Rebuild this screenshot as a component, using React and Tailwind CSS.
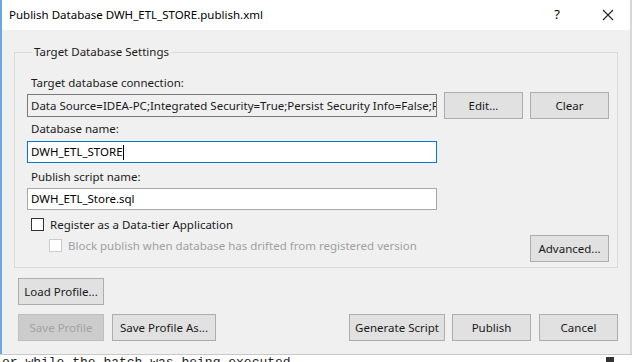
import React from 'react';

const font = { fontFamily: '"Noto Sans", "Liberation Sans", sans-serif' };

// Win32-style push button
const Btn = ({ children, className = '', disabled = false }) => (
  <button
    disabled={disabled}
    className={`h-[27px] flex items-center justify-center text-[11.5px] border ${
      disabled
        ? 'bg-[#cccccc] border-[#bfbfbf] text-[#a3a3a3]'
        : 'bg-[#e1e1e1] border-[#adadad] text-[#1a1a1a]'
    } ${className}`}
  >
    {children}
  </button>
);

const Label = ({ children }) => (
  <div className="h-[16px] leading-[16px] pl-[4px] text-[11.5px] text-[#1a1a1a]">{children}</div>
);

const Checkbox = ({ disabled }) => (
  <span
    className={`w-[13px] h-[13px] border bg-white shrink-0 ${
      disabled ? 'border-[#cccccc]' : 'border-[#333333]'
    }`}
  />
);

export default function App() {
  return (
    <div className="w-[632px] h-[362px] overflow-hidden bg-white relative" style={font}>
      <div className="h-[354px] flex flex-col border-l-2 border-r-2 border-l-[#6aa6e8] border-r-[#d8d8d8]">
        {/* title bar */}
        <div className="h-[30px] bg-white flex items-center pl-[7px] text-[11.5px] text-black shrink-0">
          <span className="flex-1">Publish Database DWH_ETL_STORE.publish.xml</span>
          <span className="w-[14px] text-center text-[13px]">?</span>
          <span className="w-[44px] flex justify-center ml-[22px]">
            <svg width="12" height="12" viewBox="0 0 12 12">
              <path d="M1 1 L11 11 M11 1 L1 11" stroke="#222" strokeWidth="1.1" fill="none" />
            </svg>
          </span>
        </div>

        {/* body */}
        <div className="flex-1 bg-[#f0f0f0] pl-[12px] pr-[12px] pt-[14px] flex flex-col">
          <fieldset className="border border-[#dcdcdc] w-[604px] h-[224px] pl-[12px] pr-[8px] pb-[6px] flex flex-col">
            <legend className="ml-[5px] px-[2px] text-[11.5px] text-[#1a1a1a] leading-[16px]">
              Target Database Settings
            </legend>

            <div className="mt-[15px]">
              <Label>Target database connection:</Label>
            </div>
            <div className="flex items-center mt-[1px]">
              <div className="w-[410px] h-[23px] border border-[#7a7a7a] bg-[#f0f0f0] flex items-center pl-[3px] text-[11.5px] text-[#1a1a1a] overflow-hidden whitespace-nowrap">
                Data Source=IDEA-PC;Integrated Security=True;Persist Security Info=False;Po
              </div>
              <Btn className="w-[79px] ml-[7px]">Edit...</Btn>
              <Btn className="w-[79px] ml-[7px]">Clear</Btn>
            </div>

            <div className="mt-[2px]">
              <Label>Database name:</Label>
            </div>
            <div className="w-[410px] h-[22px] mt-[4px] border border-[#0078d7] bg-white flex items-center pl-[3px] text-[11.5px] text-black">
              DWH_ETL_STORE<span className="w-px h-[15px] bg-black" />
            </div>

            <div className="mt-[6px]">
              <Label>Publish script name:</Label>
            </div>
            <div className="w-[410px] h-[22px] mt-[3px] border border-[#a8a8a8] bg-white flex items-center pl-[3px] text-[11.5px] text-black">
              DWH_ETL_Store.sql
            </div>

            <div className="flex items-center mt-[8px] pl-[4px] h-[13px]">
              <Checkbox />
              <span className="ml-[6px] text-[11.5px] text-[#1a1a1a]">Register as a Data-tier Application</span>
            </div>

            <div className="flex items-start justify-between mt-[4px]">
              <div className="flex items-center pl-[22px] mt-[4px] h-[13px]">
                <Checkbox disabled />
                <span className="ml-[6px] text-[11.5px] text-[#a0a0a0]">
                  Block publish when database has drifted from registered version
                </span>
              </div>
              <Btn className="w-[79px]">Advanced...</Btn>
            </div>
          </fieldset>

          <div className="flex flex-col gap-[9px] mt-[10px] pl-[4px]">
            <Btn className="w-[86px]">Load Profile...</Btn>
            <div className="flex items-center">
              <Btn disabled className="w-[86px]">Save Profile</Btn>
              <Btn className="w-[104px] ml-[8px]">Save Profile As...</Btn>
              <div className="flex-1" />
              <Btn className="w-[96px]">Generate Script</Btn>
              <Btn className="w-[79px] ml-[7px]">Publish</Btn>
              <Btn className="w-[79px] ml-[8px]">Cancel</Btn>
            </div>
          </div>
        </div>
      </div>

      {/* window behind the dialog */}
      <div className="h-[8px] bg-white border-t border-[#c8c8c8] flex overflow-hidden">
        <div
          className="pl-[2px] text-[13px] leading-[12px] pt-[2px] text-[#222] whitespace-nowrap"
          style={{ fontFamily: '"Liberation Mono", monospace' }}
        >
          or while the batch was being executed
        </div>
        <div className="flex-1" />
        <div className="w-[8px] h-[6px] mt-[2px] bg-[#333] mr-[18px]" />
      </div>
    </div>
  );
}
